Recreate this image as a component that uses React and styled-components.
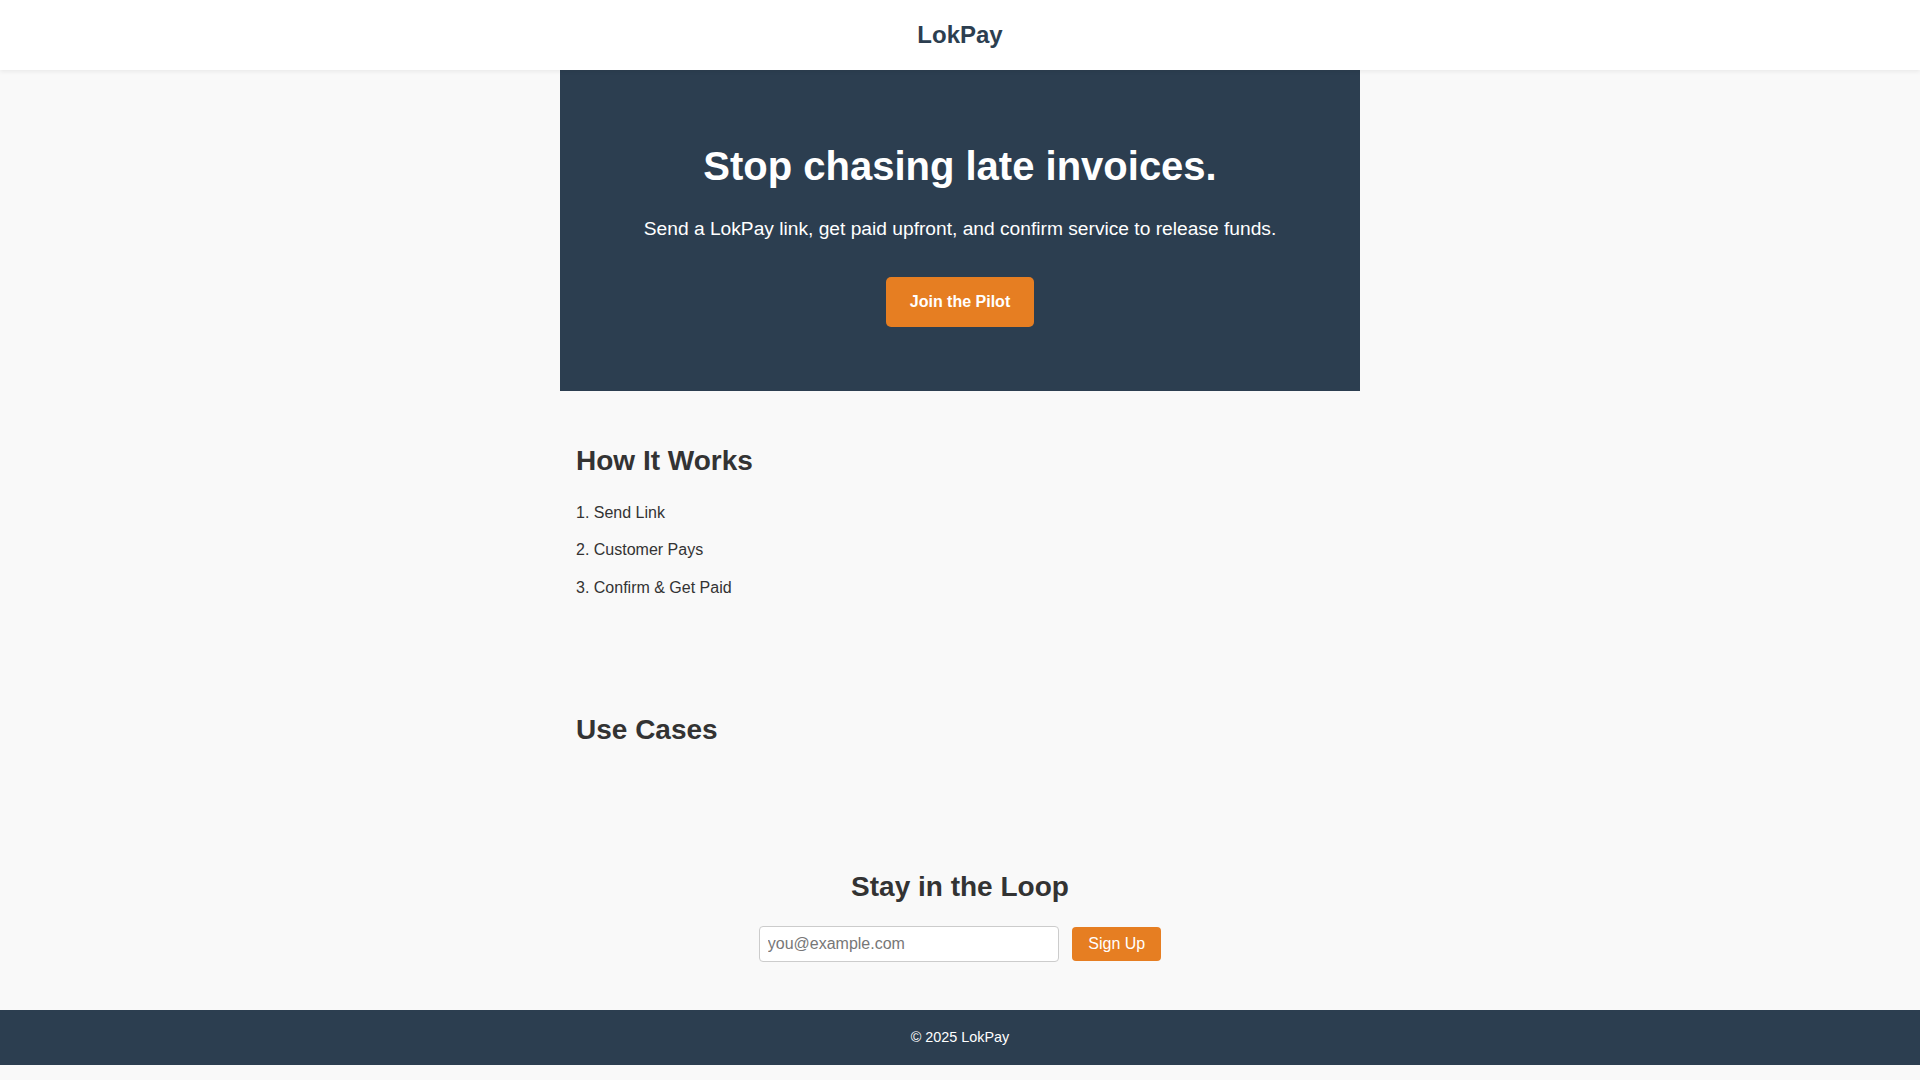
import React from "react";
import styled, { createGlobalStyle } from "styled-components";

const GlobalStyle = createGlobalStyle`
  * {
    box-sizing: border-box;
  }
  body {
    margin: 0;
    font-family: "Liberation Sans", Arial, sans-serif;
    line-height: 1.6;
    color: #333;
    background: #f9f9f9;
  }
`;

const Header = styled.header`
  background: #fff;
  padding: 1rem;
  text-align: center;
  box-shadow: 0 2px 4px rgba(0, 0, 0, 0.06);
  position: relative;
  z-index: 1;
`;

const Logo = styled.div`
  font-size: 1.5rem;
  font-weight: bold;
  color: #2c3e50;
`;

const Main = styled.main`
  max-width: 800px;
  margin: 0 auto;
`;

const Hero = styled.section`
  background: #2c3e50;
  color: #fff;
  text-align: center;
  padding: 4rem 2rem;
`;

const HeroTitle = styled.h1`
  font-size: 2.5rem;
  margin: 0 0 1rem;
`;

const HeroText = styled.p`
  font-size: 1.2rem;
  margin: 0 0 2rem;
`;

const CtaButton = styled.a`
  display: block;
  width: fit-content;
  margin: 0 auto;
  background: #e67e22;
  color: #fff;
  font-weight: bold;
  text-decoration: none;
  padding: 0.75rem 1.5rem;
  border-radius: 5px;
  cursor: pointer;
`;

const Section = styled.section`
  padding: 3rem 1rem;
  text-align: ${(p) => (p.$center ? "center" : "left")};
`;

const SectionTitle = styled.h2`
  font-size: 1.75rem;
  margin: 0 0 1rem;
`;

const Steps = styled.ol`
  list-style: none;
  margin: 0;
  padding: 0;
`;

const Step = styled.li`
  margin-bottom: 0.75rem;
`;

const Cases = styled.div`
  display: grid;
  grid-template-columns: repeat(auto-fit, minmax(220px, 1fr));
  gap: 1rem;
`;

const SignupForm = styled.form`
  display: flex;
  justify-content: center;
  align-items: center;
  gap: 0.85rem;
`;

const EmailInput = styled.input`
  width: 300px;
  padding: 0.5rem;
  font-family: inherit;
  font-size: 1rem;
  border: 1px solid #ccc;
  border-radius: 4px;
  background: #fff;
  color: #333;
  &::placeholder {
    color: #777;
  }
`;

const SignupButton = styled.button`
  padding: 0.5rem 1rem;
  font-family: inherit;
  font-size: 1rem;
  background: #e67e22;
  color: #fff;
  border: none;
  border-radius: 4px;
  cursor: pointer;
`;

const Footer = styled.footer`
  background: #2c3e50;
  color: #fff;
  text-align: center;
  padding: 1rem;
  font-size: 0.9rem;
`;

const steps = ["1. Send Link", "2. Customer Pays", "3. Confirm & Get Paid"];

export default function App() {
  return (
    <>
      <GlobalStyle />
      <Header>
        <Logo>LokPay</Logo>
      </Header>
      <Main>
        <Hero>
          <HeroTitle>Stop chasing late invoices.</HeroTitle>
          <HeroText>
            Send a LokPay link, get paid upfront, and confirm service to release funds.
          </HeroText>
          <CtaButton>Join the Pilot</CtaButton>
        </Hero>

        <Section>
          <SectionTitle>How It Works</SectionTitle>
          <Steps>
            {steps.map((s) => (
              <Step key={s}>{s}</Step>
            ))}
          </Steps>
        </Section>

        <Section>
          <SectionTitle>Use Cases</SectionTitle>
          <Cases />
        </Section>

        <Section $center>
          <SectionTitle>Stay in the Loop</SectionTitle>
          <SignupForm onSubmit={(e) => e.preventDefault()}>
            <EmailInput type="email" placeholder="you@example.com" />
            <SignupButton type="submit">Sign Up</SignupButton>
          </SignupForm>
        </Section>
      </Main>
      <Footer>© 2025 LokPay</Footer>
    </>
  );
}
